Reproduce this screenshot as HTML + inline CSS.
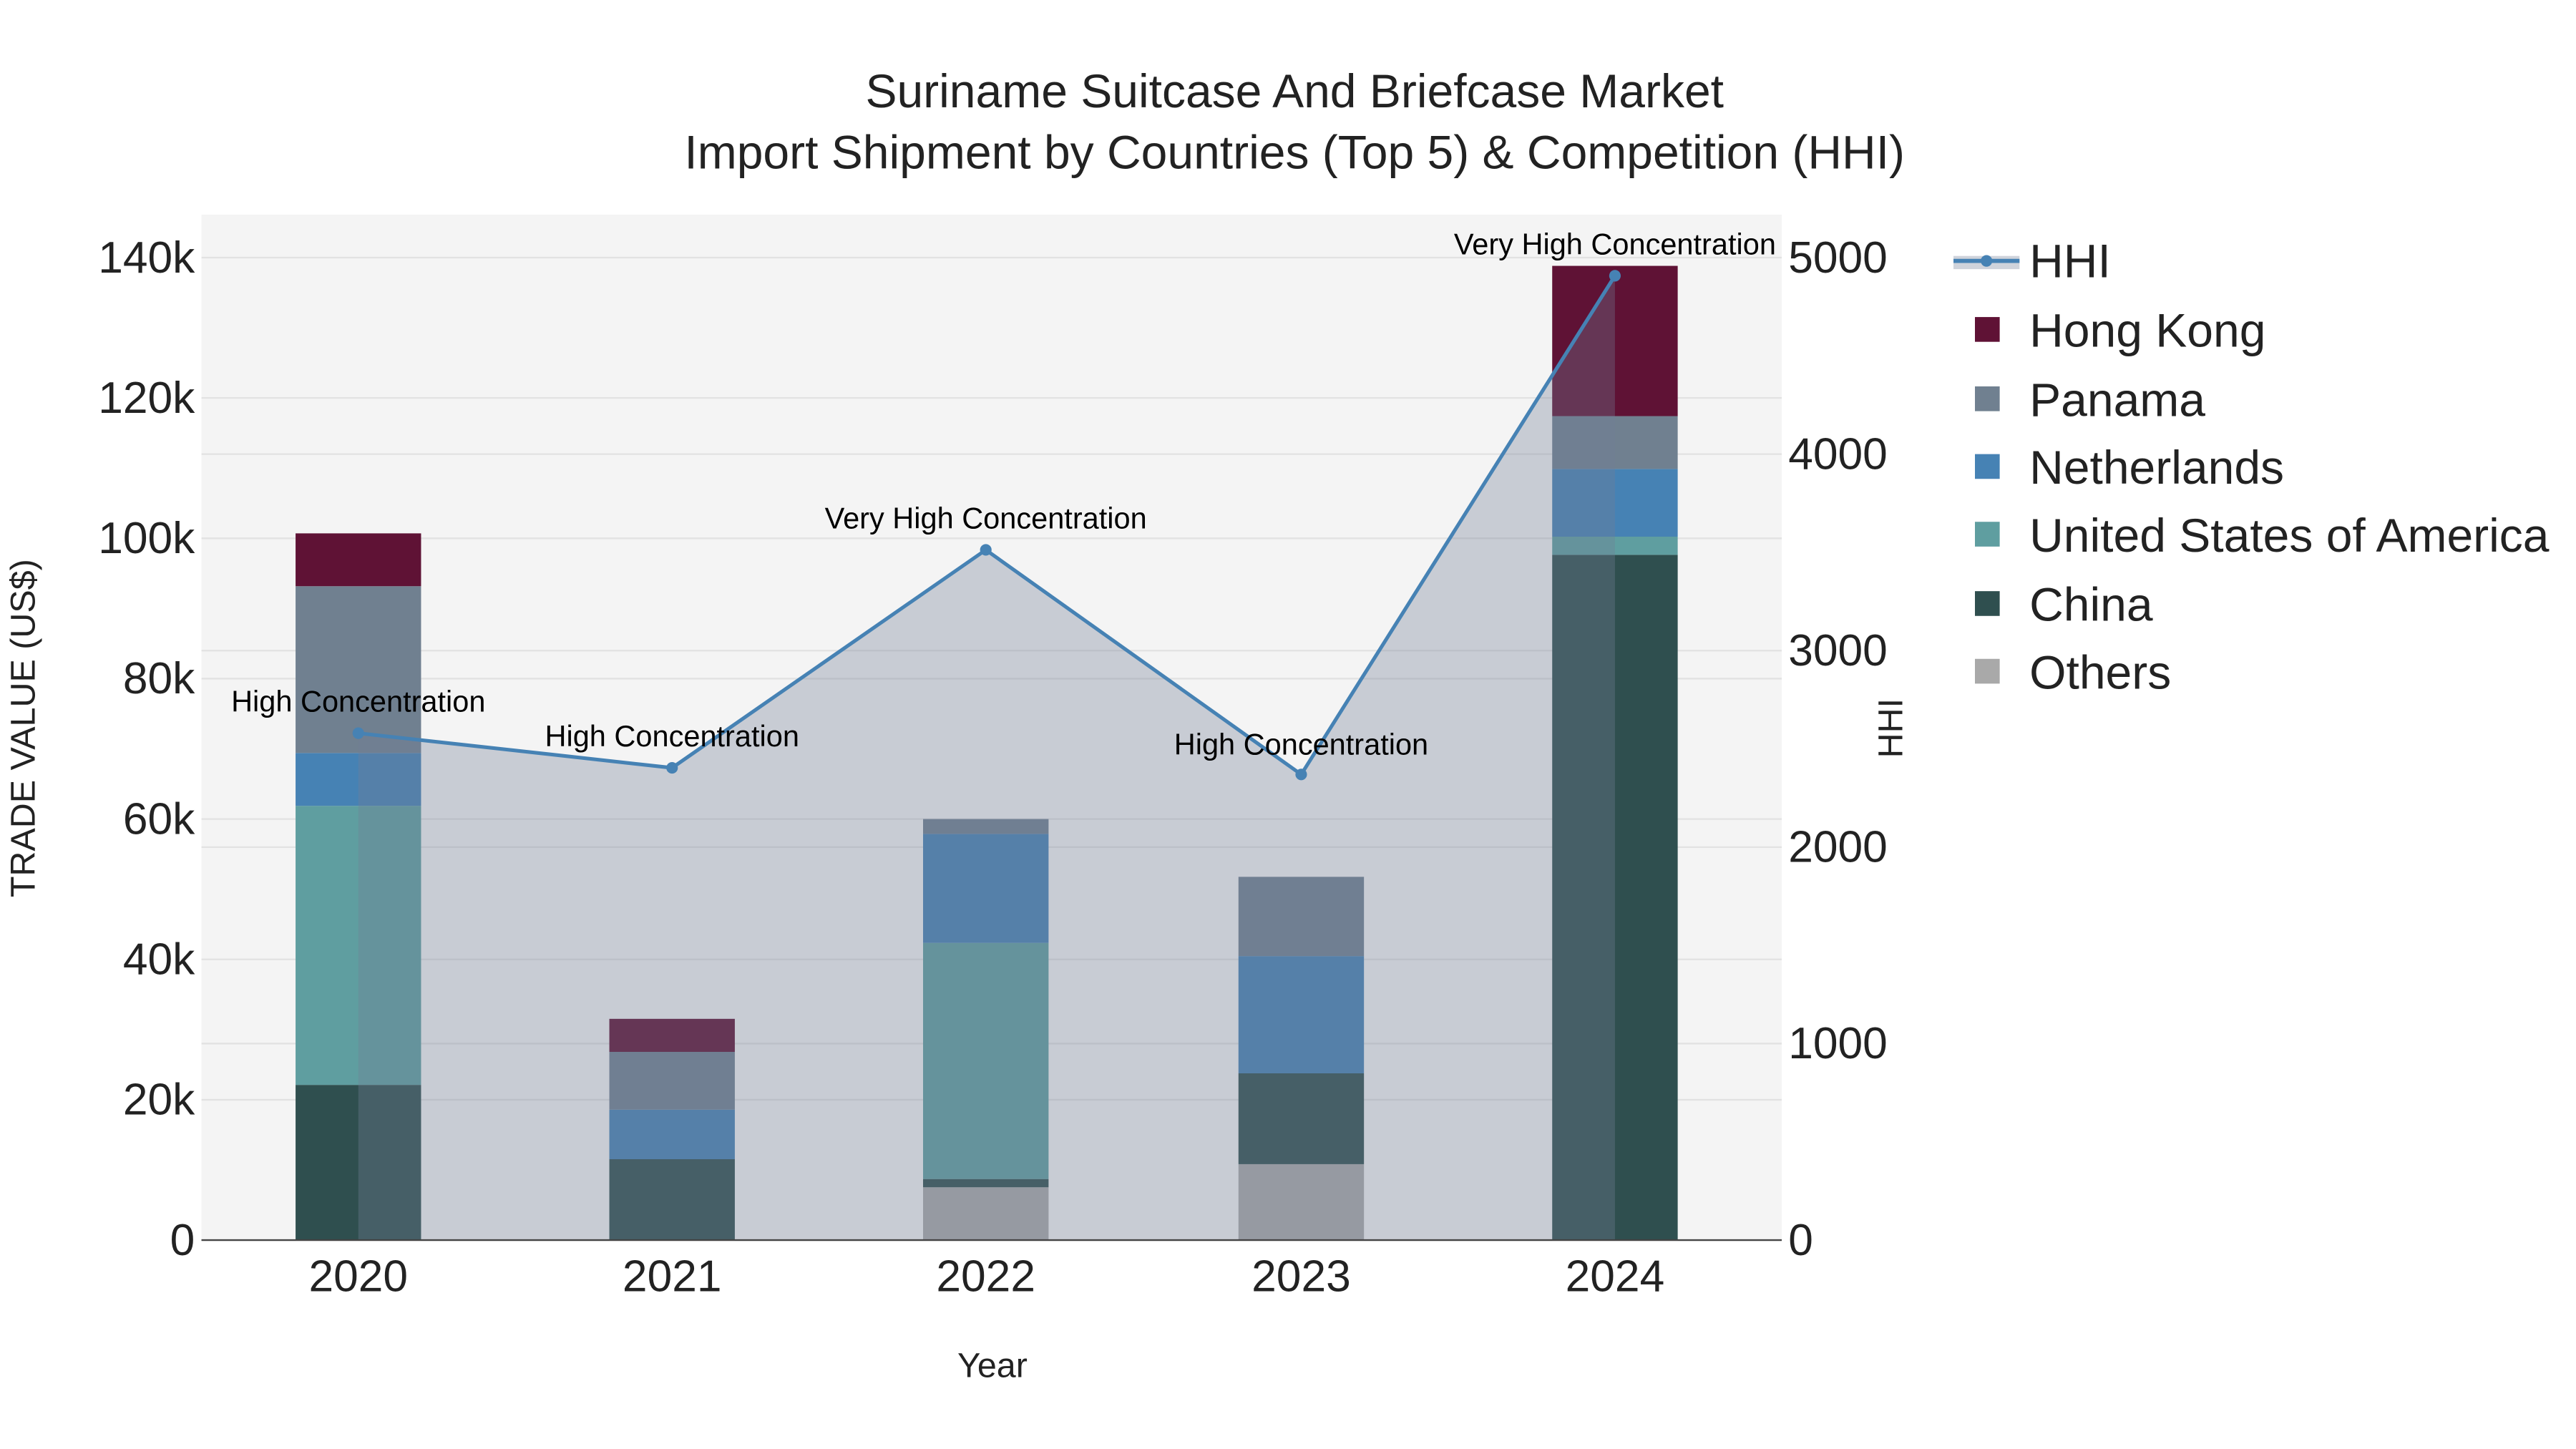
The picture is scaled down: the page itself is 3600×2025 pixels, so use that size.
<!DOCTYPE html>
<html><head><meta charset="utf-8"><style>
html,body{margin:0;padding:0;background:#fff;}
svg{display:block;font-family:"Liberation Sans",Arial,sans-serif;}
</style></head><body>
<svg width="3600" height="2025" viewBox="0 0 1560 877.5" xmlns="http://www.w3.org/2000/svg">
<rect width="1560" height="877.5" fill="#fff"/>
<rect x="122" y="130" width="957" height="621" fill="#f4f4f4"/>
<g stroke="#e2e2e2" stroke-width="1">
<line x1="122" x2="1079" y1="666" y2="666"/><line x1="122" x2="1079" y1="581" y2="581"/><line x1="122" x2="1079" y1="496" y2="496"/><line x1="122" x2="1079" y1="411" y2="411"/><line x1="122" x2="1079" y1="326" y2="326"/><line x1="122" x2="1079" y1="241" y2="241"/><line x1="122" x2="1079" y1="156" y2="156"/>
<line x1="122" x2="1079" y1="632" y2="632"/><line x1="122" x2="1079" y1="513" y2="513"/><line x1="122" x2="1079" y1="394" y2="394"/><line x1="122" x2="1079" y1="275" y2="275"/>
</g>
<g>
<rect x="179" y="657" width="76" height="94" fill="#2f4f4f"/>
<rect x="179" y="488" width="76" height="169" fill="#5f9ea0"/>
<rect x="179" y="456" width="76" height="32" fill="#4682b4"/>
<rect x="179" y="355" width="76" height="101" fill="#708090"/>
<rect x="179" y="323" width="76" height="32" fill="#5f1235"/>

<rect x="369" y="702" width="76" height="49" fill="#2f4f4f"/>
<rect x="369" y="672" width="76" height="30" fill="#4682b4"/>
<rect x="369" y="637" width="76" height="35" fill="#708090"/>
<rect x="369" y="617" width="76" height="20" fill="#5f1235"/>

<rect x="559" y="719" width="76" height="32" fill="#a9a9a9"/>
<rect x="559" y="714" width="76" height="5" fill="#2f4f4f"/>
<rect x="559" y="571" width="76" height="143" fill="#5f9ea0"/>
<rect x="559" y="505" width="76" height="66" fill="#4682b4"/>
<rect x="559" y="496" width="76" height="9" fill="#708090"/>

<rect x="750" y="705" width="76" height="46" fill="#a9a9a9"/>
<rect x="750" y="650" width="76" height="55" fill="#2f4f4f"/>
<rect x="750" y="579" width="76" height="71" fill="#4682b4"/>
<rect x="750" y="531" width="76" height="48" fill="#708090"/>

<rect x="940" y="336" width="76" height="415" fill="#2f4f4f"/>
<rect x="940" y="325" width="76" height="11" fill="#5f9ea0"/>
<rect x="940" y="284" width="76" height="41" fill="#4682b4"/>
<rect x="940" y="252" width="76" height="32" fill="#708090"/>
<rect x="940" y="161" width="76" height="91" fill="#5f1235"/>
</g>
<polygon points="217,751 217,444 407,465 597,333 788,469 978,167 978,751" fill="rgb(115,126,150)" fill-opacity="0.34"/>
<polyline points="217,444 407,465 597,333 788,469 978,167" fill="none" stroke="#4682b4" stroke-width="2.2"/>
<g fill="#4682b4"><circle cx="217" cy="444" r="3.5"/><circle cx="407" cy="465" r="3.5"/><circle cx="597" cy="333" r="3.5"/><circle cx="788" cy="469" r="3.5"/><circle cx="978" cy="167" r="3.5"/></g>
<line x1="122" x2="1079" y1="751" y2="751" stroke="#444" stroke-width="1"/>
<g font-size="18" fill="#000" text-anchor="middle">
<text x="217" y="431">High Concentration</text>
<text x="407" y="452">High Concentration</text>
<text x="597" y="320">Very High Concentration</text>
<text x="788" y="457">High Concentration</text>
<text x="978" y="154">Very High Concentration</text>
</g>
<g font-size="27" fill="#222" text-anchor="end">
<text x="118" y="760">0</text><text x="118" y="675">20k</text><text x="118" y="590">40k</text><text x="118" y="505">60k</text><text x="118" y="420">80k</text><text x="118" y="335">100k</text><text x="118" y="250">120k</text><text x="118" y="165">140k</text>
</g>
<g font-size="27" fill="#222">
<text x="1083" y="760">0</text><text x="1083" y="641">1000</text><text x="1083" y="522">2000</text><text x="1083" y="403">3000</text><text x="1083" y="284">4000</text><text x="1083" y="165">5000</text>
</g>
<g font-size="27" fill="#222" text-anchor="middle">
<text x="217" y="782">2020</text><text x="407" y="782">2021</text><text x="597" y="782">2022</text><text x="788" y="782">2023</text><text x="978" y="782">2024</text>
</g>
<text x="601" y="834" font-size="21" fill="#222" text-anchor="middle">Year</text>
<text transform="translate(21,441) rotate(-90)" font-size="21" fill="#222" text-anchor="middle">TRADE VALUE (US$)</text>
<text transform="translate(1152,441) rotate(-90)" font-size="21" fill="#222" text-anchor="middle">HHI</text>
<g font-size="28.6" fill="#222" text-anchor="middle">
<text x="784" y="65">Suriname Suitcase And Briefcase Market</text>
<text x="784" y="102">Import Shipment by Countries (Top 5) &amp; Competition (HHI)</text>
</g>
<rect x="1183" y="155" width="40" height="8" fill="rgb(115,126,150)" fill-opacity="0.34"/>
<line x1="1183" x2="1223" y1="158" y2="158" stroke="#4682b4" stroke-width="2.5"/>
<circle cx="1203" cy="158" r="3.5" fill="#4682b4"/>
<rect x="1196" y="192" width="15" height="15" fill="#5f1235"/>
<rect x="1196" y="234" width="15" height="15" fill="#708090"/>
<rect x="1196" y="275" width="15" height="15" fill="#4682b4"/>
<rect x="1196" y="316" width="15" height="15" fill="#5f9ea0"/>
<rect x="1196" y="358" width="15" height="15" fill="#2f4f4f"/>
<rect x="1196" y="399" width="15" height="15" fill="#a9a9a9"/>
<g font-size="28.6" fill="#222">
<text x="1229" y="168">HHI</text>
<text x="1229" y="210">Hong Kong</text>
<text x="1229" y="252">Panama</text>
<text x="1229" y="293">Netherlands</text>
<text x="1229" y="334">United States of America</text>
<text x="1229" y="376">China</text>
<text x="1229" y="417">Others</text>
</g>
</svg>
</body></html>
